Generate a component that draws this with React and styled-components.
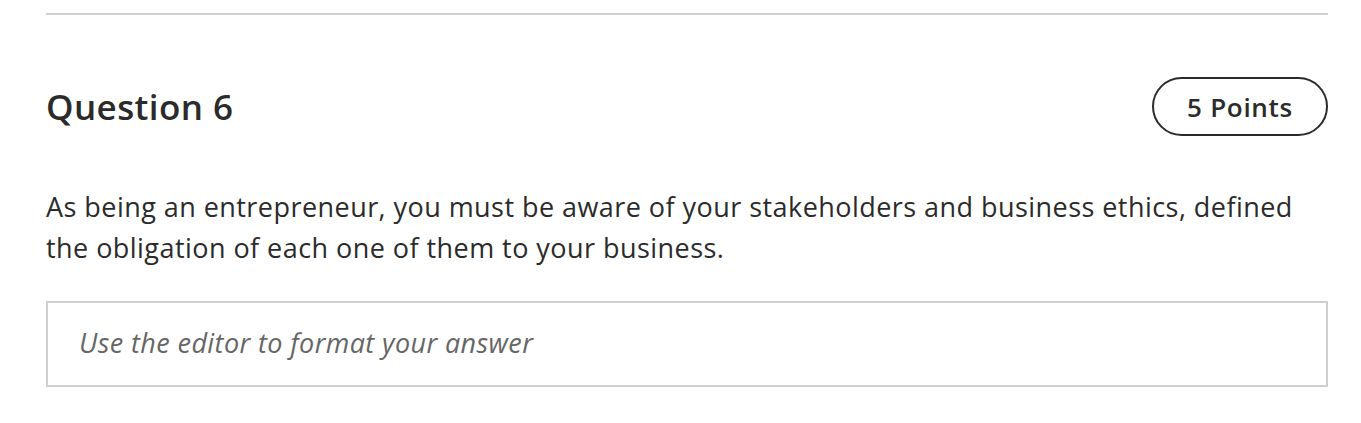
import React from 'react'
import styled, { createGlobalStyle } from 'styled-components'

const GlobalStyle = createGlobalStyle`
    body {
        margin: 0;
        background: #ffffff;
        font-family: 'Open Sans', sans-serif;
        color: #2b2b2b;
    }
`;

const Page = styled.div`
    padding: 13px 33px 0 46px;
`;

const Divider = styled.hr`
    margin: 0;
    border: none;
    border-top: 2px solid #cfcfcf;
`;

const Header = styled.div`
    display: flex;
    justify-content: space-between;
    align-items: center;
    margin-top: 62px;
`;

const Title = styled.h2`
    margin: 0;
    font-size: 35px;
    font-weight: 600;
    letter-spacing: 0.4px;
    color: #2b2b2b;
`;

const Points = styled.div`
    display: flex;
    align-items: center;
    justify-content: center;
    width: 176px;
    height: 59px;
    box-sizing: border-box;
    border: 2px solid #2b2b2b;
    border-radius: 30px;
    font-size: 26px;
    font-weight: 600;
    letter-spacing: 0.7px;
    color: #2b2b2b;
`;

const Prompt = styled.p`
    margin: 50px 0 0;
    font-size: 27px;
    letter-spacing: 0.45px;
    line-height: 41px;
    color: #2b2b2b;
`;

const Editor = styled.div`
    margin-top: 33px;
    height: 86px;
    box-sizing: border-box;
    border: 2px solid #cfcfcf;
    display: flex;
    align-items: center;
    padding: 0 0 3px 31px;
`;

const Placeholder = styled.span`
    font-style: italic;
    font-size: 27px;
    letter-spacing: 0.4px;
    color: #666666;
`;

const App = () => {
    return (
        <>
            <GlobalStyle />
            <Page>
                <Divider />
                <Header>
                    <Title>Question 6</Title>
                    <Points>5 Points</Points>
                </Header>
                <Prompt>
                    As being an entrepreneur, you must be aware of your stakeholders and business ethics, defined the obligation of each one of them to your business.
                </Prompt>
                <Editor>
                    <Placeholder>Use the editor to format your answer</Placeholder>
                </Editor>
            </Page>
        </>
    )
}

export default App
